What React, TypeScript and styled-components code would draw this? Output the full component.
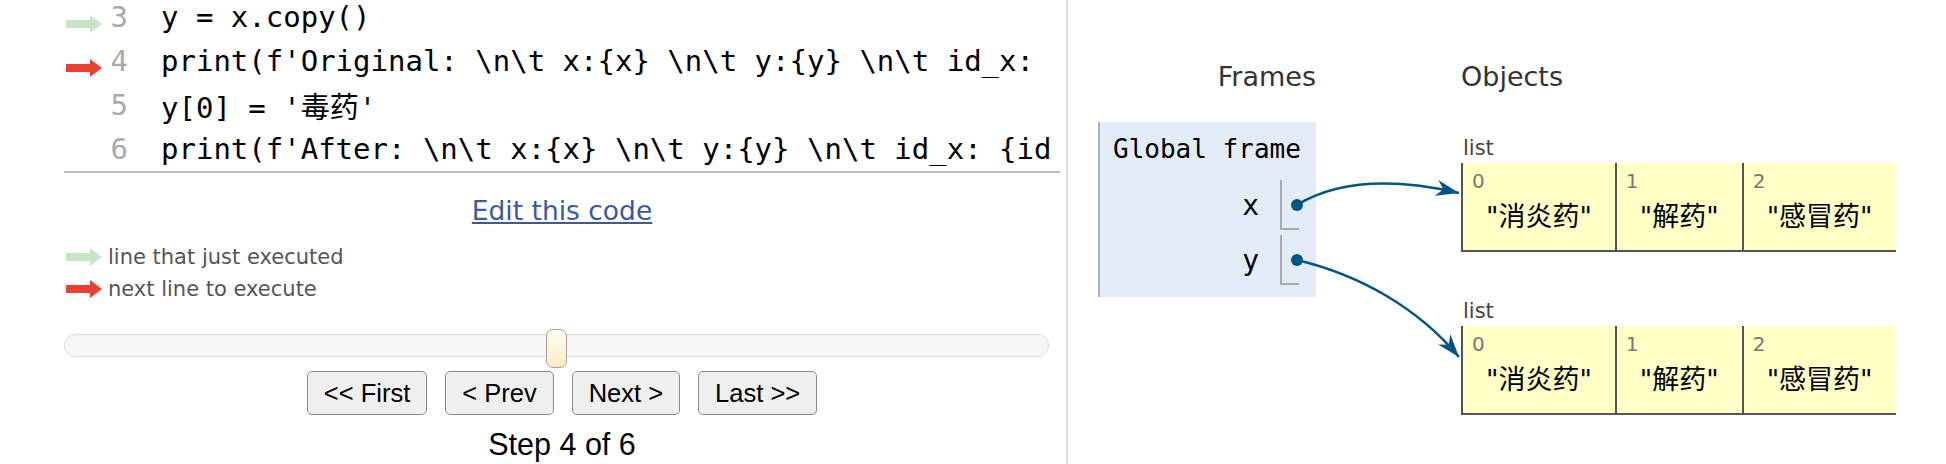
import React from "react";
import styled, { createGlobalStyle } from "styled-components";

const GlobalStyle = createGlobalStyle`
  html, body {
    margin: 0;
    padding: 0;
    background: #fff;
  }
  body {
    width: 1946px;
    height: 464px;
    overflow: hidden;
  }
`;

const MONO = `"DejaVu Sans Mono", "Noto Sans CJK SC", monospace`;
const SANS = `"DejaVu Sans", "Noto Sans CJK SC", sans-serif`;
const ARIAL = `"Liberation Sans", Arial, sans-serif`;

const Page = styled.div`
  position: relative;
  display: flex;
  width: 1946px;
  height: 464px;
  overflow: hidden;
  background: #fff;
`;

/* ---------- left: code + controls ---------- */

const LeftPane = styled.div`
  width: 996px;
  padding: 0 6px 0 64px;
  border-right: 2px solid #ddd;
  display: flex;
  flex-direction: column;
  flex-shrink: 0;
`;

const CodeBlock = styled.div`
  margin-top: -5px;
  border-bottom: 2px solid #bbb;
  overflow: hidden;
`;

const CodeRow = styled.div`
  display: flex;
  align-items: center;
  height: 44px;
  white-space: pre;
  font-family: ${MONO};
  font-size: 29px;
`;

const Gutter = styled.div`
  width: 40px;
  height: 20px;
  flex-shrink: 0;
`;

const LineNo = styled.span`
  width: 24px;
  flex-shrink: 0;
  text-align: right;
  color: #aaa;
`;

const CodeText = styled.span`
  display: block;
  flex: 1;
  min-width: 0;
  overflow: hidden;
  margin-left: 33px;
  color: #000;
`;

const EditWrap = styled.div`
  margin-top: 22px;
  text-align: center;
  font-family: ${SANS};
  font-size: 26.5px;
  line-height: 32px;
`;

const EditLink = styled.a`
  color: #3d58a5;
  text-decoration: underline;
  text-underline-offset: 2px;
`;

const Legend = styled.div`
  margin-top: 14px;
  display: flex;
  flex-direction: column;
`;

const LegendRow = styled.div`
  display: flex;
  align-items: center;
  height: 32px;
  font-family: ${SANS};
  font-size: 21px;
  color: #555;
`;

const LegendText = styled.span`
  margin-left: 4px;
`;

const SliderTrack = styled.div`
  position: relative;
  margin: 29px 11px 0 0;
  height: 23px;
  box-sizing: border-box;
  border: 1px solid #ddd;
  border-radius: 11px;
  background: #f6f6f6;
`;

const SliderHandle = styled.div`
  position: absolute;
  top: -6px;
  width: 21px;
  height: 39px;
  margin-left: -10.5px;
  box-sizing: border-box;
  border: 1.5px solid #a9a496;
  border-radius: 7px;
  background: linear-gradient(#fefcf2 0%, #fdf6dc 50%, #f8ecc4 100%);
`;

const ButtonRow = styled.div`
  margin-top: 14px;
  display: flex;
  justify-content: center;
  gap: 18px;
`;

const NavButton = styled.button`
  height: 44px;
  padding: 0 16px;
  box-sizing: border-box;
  border: 1.5px solid #8a8a8a;
  border-radius: 5px;
  background: #efefef;
  font-family: ${ARIAL};
  font-size: 25.5px;
  color: #000;
`;

const StepText = styled.div`
  margin-top: 12px;
  text-align: center;
  font-family: ${ARIAL};
  font-size: 30.5px;
  line-height: 34px;
  color: #000;
`;

/* ---------- right: frames + objects ---------- */

const RightPane = styled.div`
  display: flex;
  padding-left: 30px;
`;

const Heading = styled.div<{ $align: "left" | "right" }>`
  margin-top: 62px;
  font-family: ${SANS};
  font-size: 27px;
  line-height: 30px;
  color: #333;
  text-align: ${(p) => p.$align};
`;

const FramesCol = styled.div`
  width: 218px;
  flex-shrink: 0;
`;

const FrameBox = styled.div`
  margin-top: 30px;
  box-sizing: border-box;
  width: 218px;
  padding: 12px 17px 12px 13px;
  background: #e2ebf6;
  border-left: 2px solid #a9b2bb;
`;

const FrameTitle = styled.div`
  font-family: ${MONO};
  font-size: 26px;
  line-height: 30px;
  color: #000;
  white-space: nowrap;
`;

const VarRows = styled.div`
  margin-top: 16px;
  display: flex;
  flex-direction: column;
  gap: 5px;
`;

const VarRow = styled.div`
  display: flex;
  justify-content: flex-end;
  align-items: center;
  height: 50px;
`;

const VarName = styled.span`
  margin-right: 21px;
  font-family: ${MONO};
  font-size: 28px;
  color: #000;
`;

const ValueCell = styled.div`
  width: 19px;
  height: 50px;
  box-sizing: border-box;
  border-left: 2px solid #aaa;
  border-bottom: 2px solid #aaa;
`;

const ObjectsCol = styled.div`
  margin-left: 145px;
  width: 436px;
  overflow: hidden;
  flex-shrink: 0;
`;

const ListStack = styled.div`
  margin-top: 44px;
  display: flex;
  flex-direction: column;
  gap: 47px;
`;

const ListLabel = styled.div`
  padding-left: 2px;
  font-family: ${SANS};
  font-size: 21px;
  line-height: 24px;
  color: #444;
`;

const ListBox = styled.div`
  margin: 3px 0 0 0;
  display: flex;
`;

const ListCell = styled.div`
  flex-shrink: 0;
  height: 89px;
  box-sizing: border-box;
  border-left: 2px solid #555;
  border-bottom: 2px solid #555;
  background: #ffffc6;
`;

const CellIndex = styled.div`
  margin: 7px 0 0 9px;
  font-family: ${SANS};
  font-size: 20px;
  line-height: 22px;
  color: #777;
`;

const CellValue = styled.div`
  margin-top: 8px;
  padding: 0 23px;
  font-family: ${SANS};
  font-size: 27px;
  line-height: 34px;
  white-space: nowrap;
  color: #000;
`;

const Overlay = styled.svg`
  position: absolute;
  left: 0;
  top: 0;
  pointer-events: none;
`;

const Arrow = ({ color }: { color: string }) => (
  <svg width="40" height="20" viewBox="0 0 40 20">
    <rect x="2" y="6" width="25" height="8" fill={color} />
    <polygon points="26,1 38,10 26,19" fill={color} />
  </svg>
);

const GREEN = "#c8e5c8";
const RED = "#e93f34";

// only the part of each line that fits before the pane edge
const lines = [
  { n: 3, arrow: GREEN, text: "y = x.copy()" },
  { n: 4, arrow: RED, text: "print(f'Original: \\n\\t x:{x} \\n\\t y:{y} \\n\\t id_x:" },
  { n: 5, arrow: "", text: "y[0] = '毒药'" },
  { n: 6, arrow: "", text: "print(f'After: \\n\\t x:{x} \\n\\t y:{y} \\n\\t id_x: {id" },
];

const items = ['"消炎药"', '"解药"', '"感冒药"'];

const step = 4;
const totalSteps = 6;

const PyList = () => (
  <div>
    <ListLabel>list</ListLabel>
    <ListBox>
      {items.map((v, i) => (
        <ListCell key={i}>
          <CellIndex>{i}</CellIndex>
          <CellValue>{v}</CellValue>
        </ListCell>
      ))}
    </ListBox>
  </div>
);

const App = () => {
  const handlePos = ((step - 1) / totalSteps) * 100;

  return (
    <Page>
      <GlobalStyle />
      <LeftPane>
        <CodeBlock>
          {lines.map((l) => (
            <CodeRow key={l.n}>
              <Gutter>{l.arrow && <Arrow color={l.arrow} />}</Gutter>
              <LineNo>{l.n}</LineNo>
              <CodeText>{l.text}</CodeText>
            </CodeRow>
          ))}
        </CodeBlock>

        <EditWrap>
          <EditLink href="#">Edit this code</EditLink>
        </EditWrap>

        <Legend>
          <LegendRow>
            <Arrow color={GREEN} />
            <LegendText>line that just executed</LegendText>
          </LegendRow>
          <LegendRow>
            <Arrow color={RED} />
            <LegendText>next line to execute</LegendText>
          </LegendRow>
        </Legend>

        <SliderTrack>
          <SliderHandle style={{ left: `${handlePos}%` }} />
        </SliderTrack>

        <ButtonRow>
          <NavButton>&lt;&lt; First</NavButton>
          <NavButton>&lt; Prev</NavButton>
          <NavButton>Next &gt;</NavButton>
          <NavButton>Last &gt;&gt;</NavButton>
        </ButtonRow>

        <StepText>
          Step {step} of {totalSteps}
        </StepText>
      </LeftPane>

      <RightPane>
        <FramesCol>
          <Heading $align="right">Frames</Heading>
          <FrameBox>
            <FrameTitle>Global frame</FrameTitle>
            <VarRows>
              <VarRow>
                <VarName>x</VarName>
                <ValueCell />
              </VarRow>
              <VarRow>
                <VarName>y</VarName>
                <ValueCell />
              </VarRow>
            </VarRows>
          </FrameBox>
        </FramesCol>

        <ObjectsCol>
          <Heading $align="left">Objects</Heading>
          <ListStack>
            <PyList />
            <PyList />
          </ListStack>
        </ObjectsCol>
      </RightPane>

      <Overlay width="1946" height="464" viewBox="0 0 1946 464">
        <defs>
          <marker
            id="head"
            markerUnits="userSpaceOnUse"
            markerWidth="24"
            markerHeight="16"
            refX="23"
            refY="8"
            orient="auto"
          >
            <path d="M0,0 L23,8 L0,16 L7,8 Z" fill="#005583" />
          </marker>
        </defs>
        <path
          d="M1297,205 C1330,185 1380,175 1459,193"
          fill="none"
          stroke="#005583"
          strokeWidth="2.5"
          markerEnd="url(#head)"
        />
        <path
          d="M1297,260 C1360,275 1418,308 1459,357"
          fill="none"
          stroke="#005583"
          strokeWidth="2.5"
          markerEnd="url(#head)"
        />
        <circle cx="1297" cy="205" r="6" fill="#005583" />
        <circle cx="1297" cy="260" r="6" fill="#005583" />
      </Overlay>
    </Page>
  );
};

export default App;
